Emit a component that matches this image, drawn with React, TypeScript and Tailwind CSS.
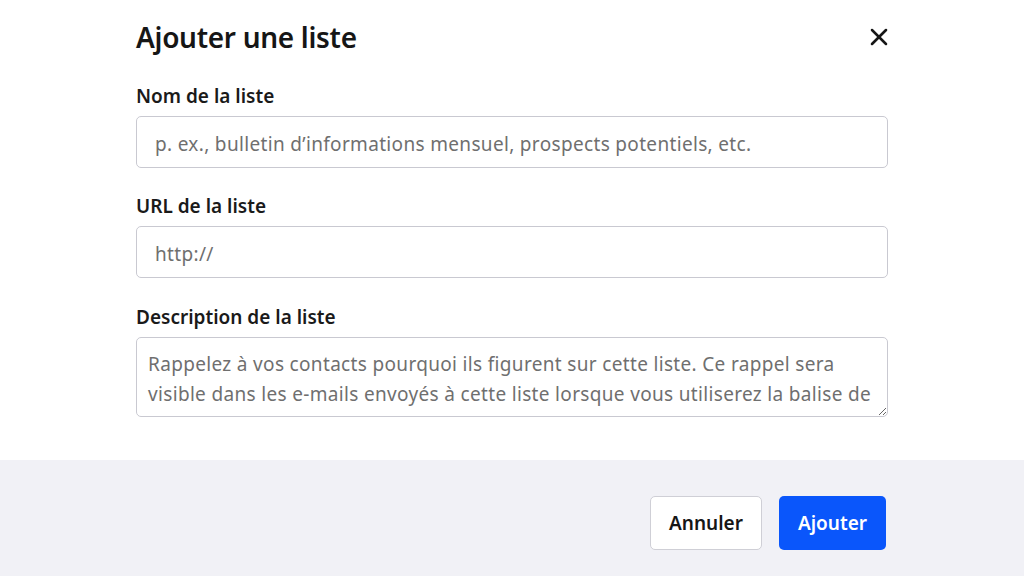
import { X } from "lucide-react";

const font = { fontFamily: '"Noto Sans", "Open Sans", Arial, sans-serif' };

function Label({ children }: { children: React.ReactNode }) {
  return <label className="block text-[19px] leading-6 font-semibold text-[#1a1a1a] mb-2">{children}</label>;
}

export default function App() {
  return (
    <div className="w-[1024px] h-[576px] bg-white flex flex-col overflow-hidden" style={font}>
      <div className="flex-1 px-[136px] pt-[18px]">
        <div className="flex items-center justify-between h-[38px] mb-[28px]">
          <h2 className="text-[28px] leading-[38px] font-semibold text-[#161616] tracking-[-0.3px]">Ajouter une liste</h2>
          <button className="w-8 h-8 flex items-center justify-center -mr-[7px] text-[#161616]">
            <X className="w-7 h-7" strokeWidth={2.2} />
          </button>
        </div>

        <Label>Nom de la liste</Label>
        <input
          className="w-full h-[52px] rounded-[5px] border border-[#c9c9d1] pl-[18px] pr-[19px] pt-[4px] text-[19px] tracking-[0.33px] placeholder:text-[#6f6f6f] outline-none"
          placeholder="p. ex., bulletin d’informations mensuel, prospects potentiels, etc."
        />

        <div className="h-[26px]" />
        <Label>URL de la liste</Label>
        <input
          className="w-full h-[52px] rounded-[5px] border border-[#c9c9d1] pl-[18px] pr-[19px] pt-[4px] text-[19px] tracking-[0.33px] placeholder:text-[#6f6f6f] outline-none"
          placeholder="http://"
        />

        <div className="h-[27px]" />
        <Label>Description de la liste</Label>
        <textarea
          className="block w-full h-[80px] rounded-[5px] border border-[#c9c9d1] px-[11px] pt-[11px] text-[19px] leading-[30px] tracking-[0.33px] placeholder:text-[#6f6f6f] outline-none resize-y"
          placeholder="Rappelez à vos contacts pourquoi ils figurent sur cette liste. Ce rappel sera visible dans les e-mails envoyés à cette liste lorsque vous utiliserez la balise de personnalisation %SENDER_LIST_REMINDER%."
        />
      </div>

      <div className="h-[116px] bg-[#f1f1f6] flex items-start justify-end gap-[17px] px-[138px] pt-[36px]">
        <button className="h-[54px] px-[18px] rounded-[5px] border border-[#cfcfd6] bg-white text-[19px] font-semibold text-[#161616]">
          Annuler
        </button>
        <button className="h-[54px] px-[19px] rounded-[5px] bg-[#0a56fb] text-[19px] font-semibold text-white">
          Ajouter
        </button>
      </div>
    </div>
  );
}
